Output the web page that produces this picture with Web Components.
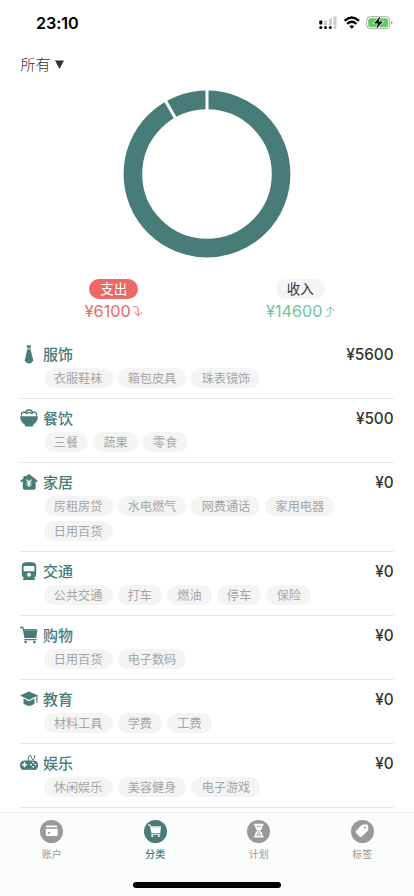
<!DOCTYPE html>
<html lang="zh-CN">
<head>
<meta charset="utf-8">
<title>分类</title>
<style>
html,body{margin:0;height:100%;background:#fff}
body{overflow:hidden;font-family:Inter,"Noto Sans CJK SC",sans-serif;color:#333}
</style>
</head>
<body>
<budget-app></budget-app>
<script>
const define = (name, html) => customElements.define(name, class extends HTMLElement {
  connectedCallback() {
    if (this.shadowRoot) return;
    const t = document.createElement('template');
    t.innerHTML = typeof html === 'function' ? html(this) : html;
    this.attachShadow({mode: 'open'}).append(t.content.cloneNode(true));
  }
});

const icons = {
  tie: '<path d="M6.600.3h4.600l-.9 3.200H7.500z"/><path d="M7.300 4.200h3.200l2.800 11.300q-1.500 3-4.300 3-2.900 0-4.300-3z"/>',
  bowl: '<path d="M0 7.300h18q-.2 5.400-4.600 8.200l-.7 2H5.300l-.7-2Q.2 12.700 0 7.300z"/><path d="M1.500 6.200Q.9 3.300 4 3.200q1.700 0 2 1.300M5.500 3Q6.300 1 9 1t3.500 2M12 4.500q.3-1.300 2-1.300 3.100.1 2.500 3M9 3.800q1.200-.8 2.400.6M9 3.800q-1.200-.8-2.400.6" fill="none" stroke="currentColor" stroke-width="1.300" stroke-linecap="round"/>',
  house: '<path d="M9 .9l9 7-.8 1.100-1.500-.6v6.400q0 1.900-1.900 1.900H4.700q-1.900 0-1.900-1.900V8.400l-1.600.6L0 7.900l3.500-2.700V2.900h2v.7z"/><path d="M6.500 6.600L9 9.300l2.500-2.700M9 9v5M6.500 10h5M6.500 12h5" fill="none" stroke="#fff" stroke-width="1.200"/>',
  train: '<path fill-rule="evenodd" d="M4.500.4Q9-.4 13.500.4q2.700.5 2.700 2.800v9.500q0 2.600-2.600 3l1.400.9v1.500H3v-1.500l1.400-.9q-2.600-.4-2.600-3V3.200Q1.800.9 4.500.4zM3.600 4.600v4q0 .6.6.6h9.600q.6 0 .6-.6v-4q0-.6-.6-.6H4.200q-.6 0-.6.6zM9 10.700a2 2 0 100 4 2 2 0 000-4z"/>',
  cart: '<path d="M0 .8h3.300l.6 2.100h13.500l-1.100 9.200H4.500L2.500 2.200H0zM4.800 13h11.700v1.200H4.200z"/><path d="M4 4.200h13.200" stroke="var(--cut,#fff)" stroke-width=".5" opacity=".7"/><circle cx="5.600" cy="16" r="1.300"/><circle cx="14.400" cy="16" r="1.300"/>',
  cap: '<path d="M9 1.400L18 5.500 9 10 0 5.500z"/><path d="M3.500 8.500L9 11.300l5.500-2.800v5.300Q9 18 3.500 13.800zM16.300 5.500h1.200v7.500l-1.200-.7z"/>',
  game: '<path d="M8.300 7q-.5-5.500 1.700-5.500 1.600 0 1.700 2.200t1.500 2q1.600-.1 1.600-4.700" fill="none" stroke="currentColor" stroke-width="1"/><path d="M4.500 6.500h9Q18 6.500 18 11.300t-3.700 4.800q-1.300 0-2.300-.3H6q-1 .3-2.300.3Q0 16.100 0 11.300t4.500-4.800z"/><path d="M4.500 8.300v5M2 10.800h5" stroke="#fff" stroke-width="1.500"/><g fill="#fff"><circle cx="13.200" cy="8.600" r=".9"/><circle cx="13.200" cy="12.800" r=".9"/><circle cx="11.100" cy="10.700" r=".9"/><circle cx="15.300" cy="10.700" r=".9"/></g>',
  card: '<path d="M3 2h12Q17 2 17 4.300H1Q1 2 3 2zM1 6.300h16v7.700q0 2-2 2H3q-2 0-2-2z"/><rect x="4" y="10.500" width="3" height="2.500" rx=".8" fill="var(--cut)"/>',
  hourglass: '<path d="M2.800-.2h12.400v2.500h-1.300q.1 4.200-3.300 6.500 3.400 2.300 3.300 6.700h1.300V18H2.800v-2.500h1.300Q4 11.100 7.400 8.800 4 6.500 4.100 2.300H2.800z"/><path d="M6.300 3.100h5.400M9 8.800v2.500M6.500 15q.1-2.500 2.500-3.400 2.400.9 2.500 3.400z" fill="none" stroke="var(--cut)" stroke-width="1.200"/>',
  tag: '<path fill-rule="evenodd" d="M10.400.6h5.300q1.800.1 1.900 1.900v5q0 .8-.6 1.400l-8.200 8q-1.200 1-2.400 0l-5.200-5.200q-1-1.200 0-2.400L9 1.200q.6-.6 1.400-.6zM13.200 3.200a1.500 1.500 0 100 3 1.500 1.500 0 000-3z"/>'
};

define('app-icon', el => `<style>
:host{display:block;width:18px;height:18px;flex:none}svg{display:block;width:100%;height:100%;fill:currentColor;overflow:visible}
</style><svg viewBox="0 0 18 18">${icons[el.getAttribute('name')]}</svg>`);

define('status-bar', `<style>
:host{display:flex;height:46px;box-sizing:border-box;padding:0 21px 0 36px;align-items:center;color:#000}
b{font:600 16.200px/20px Inter,sans-serif;flex:1;letter-spacing:-.1px}
svg{display:block;flex:none}
</style><b>23:10</b>
<svg width="74" height="16" viewBox="0 0 74 16">
<g fill="#ccc"><rect x="5" y="5.500" width="3" height="5" rx=".7"/><rect x="10" y="3.500" width="3" height="7" rx=".7"/><rect x="14.500" y="1.500" width="3" height="9" rx=".7"/><rect x="14.500" y="11" width="3" height="3" rx="1"/></g>
<rect x=".3" y="5.500" width="3" height="4" rx=".8"/><circle cx="1.800" cy="12.500" r="1.500"/><circle cx="6.500" cy="12.500" r="1.500"/><circle cx="11.300" cy="12.500" r="1.500"/>
<path d="M25.600 5.800q7.200-6.600 14.400 0M28.200 8.800q4.600-4 9.200 0" fill="none" stroke="#000" stroke-width="2.300"/><path d="M30.300 11.200q2.500-2 5 0l-2.500 2.500z"/>
<rect x="47.700" y="1.700" width="23" height="12" rx="3.600" fill="#fff" stroke="#aaa"/><rect x="49.200" y="3.200" width="20" height="9" rx="2.300" fill="#62ca63"/><path d="M72 6q1.500.3 1.500 1.700T72 9.500z" fill="#aaa"/>
<path d="M61.400 1l-6.500 7.500h4L57.300 14l6.600-7.500h-4.100z" stroke="#fff" stroke-width="1.200" paint-order="stroke"/></svg>`);

define('donut-chart', `<style>
:host{display:flex;justify-content:center;height:168px}svg{display:block}
</style><svg width="168" height="168" viewBox="-84 -84 168 168"><circle r="74.100" fill="none" stroke="#477c78" stroke-width="18.600"/>
<g stroke="#fff" stroke-width="3"><path d="M0-86V-62"/><path d="M0-86V-62" transform="rotate(-29.500)"/></g></svg>`);

define('flow-total', el => {
  const out = el.getAttribute('type') === 'out';
  return `<style>
:host{display:flex;flex-direction:column;align-items:center;flex:1;color:${out ? '#ec6965' : '#6fc796'}}
.pill{box-sizing:border-box;width:49px;height:20px;border-radius:10px;background:${out ? '#ec6965' : '#f4f4f4'};color:${out ? '#fff' : '#333'};font:400 13.500px/20px Inter,"Noto Sans CJK SC",sans-serif;text-align:center}
.sum{display:flex;align-items:center;gap:2px;height:23px;padding-top:1px;font:400 16.200px/23px Inter,sans-serif}
svg{width:10px;height:11px;fill:none;stroke:currentColor;stroke-width:1}
</style><div class="pill"><slot></slot></div><div class="sum"><span>${el.getAttribute('sum')}</span>
<svg viewBox="0 0 10 11"><path d="${out ? 'M.5.600h2q2.700 0 2.700 2.700v6.500M1.400 6.200l3.800 3.700 3.800-3.700' : 'M.5 10.400h2q2.700 0 2.700-2.700V1.200M1.400 4.800l3.800-3.700L9 4.800'}"/></svg></div>`;
});

define('sub-tag', `<style>
:host{display:block;height:20px;padding:0 10.200px;border-radius:10px;background:#f4f4f4;color:#a5a5a5;font:400 12.150px/20px "Noto Sans CJK SC",sans-serif;white-space:nowrap}
</style><slot></slot>`);

define('category-row', el => `<style>
:host{display:block;padding:9.500px 0 10px;border-bottom:1px solid #e9e9e9}
header{display:flex;height:20px;align-items:center;color:#477c78}
h2{margin:0 0 0 4.600px;flex:1;font:500 15px/20px "Noto Sans CJK SC",sans-serif}
strong{font:550 15.300px/20px Inter,sans-serif;color:#333;padding-top:1px}
.tags{display:flex;flex-wrap:wrap;gap:5px;padding:3.500px 0 0 23.200px}
</style><header><app-icon name="${el.getAttribute('icon')}"></app-icon><h2>${el.getAttribute('name')}</h2><strong>${el.getAttribute('sum')}</strong></header>
<div class="tags"><slot></slot></div>`);

define('tab-item', el => `<style>
:host{display:flex;flex-direction:column;align-items:center;flex:1;padding-top:6.500px;color:var(--cut);--cut:#999}
:host([active]){--cut:#477c78}
.disc{width:23.400px;height:23.400px;border-radius:50%;background:var(--cut);color:#fff;display:flex;align-items:center;justify-content:center}
app-icon{width:13.500px;height:13.500px}
span{margin-top:4px;font:400 9.900px/15px "Noto Sans CJK SC",sans-serif}
:host([active]) span{font-weight:500}
</style><div class="disc"><app-icon name="${el.getAttribute('icon')}"></app-icon></div><span><slot></slot></span>`);

define('tab-bar', `<style>
:host{display:flex;flex-direction:column;align-items:center;height:84px;box-sizing:border-box;border-top:1px solid #ececec;background:#fbfdfc}
nav{display:flex;width:100%;height:69.300px}
i{display:block;width:148px;height:5.300px;border-radius:3px;background:#000}
</style><nav><slot></slot></nav><i></i>`);

const rows = [
  ['tie', '服饰', '¥5600', '衣服鞋袜 箱包皮具 珠表镜饰'],
  ['bowl', '餐饮', '¥500', '三餐 蔬果 零食'],
  ['house', '家居', '¥0', '房租房贷 水电燃气 网费通话 家用电器 日用百货'],
  ['train', '交通', '¥0', '公共交通 打车 燃油 停车 保险'],
  ['cart', '购物', '¥0', '日用百货 电子数码'],
  ['cap', '教育', '¥0', '材料工具 学费 工费'],
  ['game', '娱乐', '¥0', '休闲娱乐 美容健身 电子游戏']
];

define('budget-app', `<style>
:host{display:flex;flex-direction:column;width:414px;height:896px;background:#fff;overflow:hidden}
.filter{display:flex;align-items:center;gap:5px;height:36px;padding-left:20.400px;font:300 15px/36px "Noto Sans CJK SC",sans-serif;color:#333}
.filter svg{width:9px;height:9px;fill:#333}
donut-chart{margin-top:8.300px}
.totals{display:flex;padding:20.700px 20.400px 0;height:56px}
main{padding:0 20.400px;flex:1;min-height:0}
</style>
<status-bar></status-bar>
<div class="filter">所有 <svg viewBox="0 0 9 9"><path d="M0 .5h9l-4.500 8.500z"/></svg></div>
<donut-chart></donut-chart>
<div class="totals"><flow-total type="out" sum="¥6100">支出</flow-total><flow-total type="in" sum="¥14600">收入</flow-total></div>
<main>${rows.map(([i, n, s, t]) => `<category-row icon="${i}" name="${n}" sum="${s}">${t.split(' ').map(x => `<sub-tag>${x}</sub-tag>`).join('')}</category-row>`).join('')}</main>
<tab-bar><tab-item icon="card">账户</tab-item><tab-item icon="cart" active>分类</tab-item><tab-item icon="hourglass">计划</tab-item><tab-item icon="tag">标签</tab-item></tab-bar>`);
</script>
</body>
</html>
